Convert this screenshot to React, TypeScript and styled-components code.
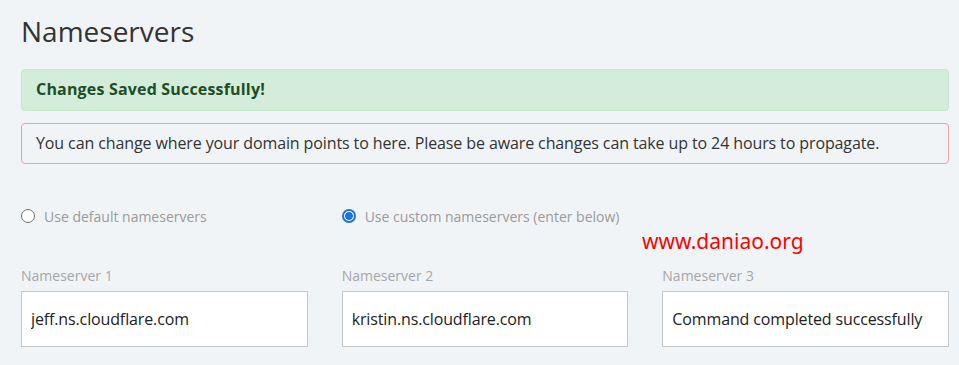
import styled, { createGlobalStyle } from "styled-components";

const GlobalStyle = createGlobalStyle`
  body {
    margin: 0;
    background: #f1f4f7;
    font-family: "Open Sans", "Noto Sans", sans-serif;
    color: #333;
  }
`;

const Page = styled.div`
  position: relative;
  padding: 12px 10px 18px 21px;
`;

const Title = styled.h1`
  margin: 0;
  font-size: 28px;
  font-weight: 400;
  line-height: 38px;
  color: #333;
`;

const Alert = styled.div<{ $kind: "success" | "info" }>`
  box-sizing: border-box;
  height: ${(p) => (p.$kind === "success" ? "42px" : "41px")};
  margin-top: ${(p) => (p.$kind === "success" ? "19px" : "12px")};
  padding: 0 14px;
  border: 1px solid ${(p) => (p.$kind === "success" ? "#c3e6cb" : "#f2a0a8")};
  border-radius: 4px;
  background: ${(p) => (p.$kind === "success" ? "#d4edda" : "transparent")};
  color: ${(p) => (p.$kind === "success" ? "#1e4d26" : "#333")};
  font-size: 16px;
  font-weight: ${(p) => (p.$kind === "success" ? 700 : 400)};
  letter-spacing: ${(p) => (p.$kind === "success" ? "0.18px" : "-0.11px")};
  line-height: 39px;
  white-space: nowrap;
`;

const Grid = styled.div<{ $top: number }>`
  display: grid;
  grid-template-columns: repeat(3, 1fr);
  column-gap: 34px;
  margin-top: ${(p) => p.$top}px;
`;

const RadioLabel = styled.label`
  display: flex;
  align-items: center;
  gap: 9px;
  height: 20px;
  font-size: 14px;
  color: #9a9a9a;
  white-space: nowrap;
`;

const RadioDot = styled.span<{ $checked?: boolean }>`
  box-sizing: border-box;
  flex: none;
  width: 14px;
  height: 14px;
  border-radius: 50%;
  border: ${(p) => (p.$checked ? "2px solid #1a73e8" : "1px solid #707070")};
  background: ${(p) =>
    p.$checked ? "radial-gradient(circle, #1a73e8 0 3.6px, #fff 4.2px)" : "#fff"};
`;

const Field = styled.div`
  display: flex;
  flex-direction: column;
  gap: 5px;
`;

const FieldLabel = styled.div`
  font-size: 14px;
  line-height: 20px;
  color: #a6a6a6;
`;

const Input = styled.input`
  box-sizing: border-box;
  width: 100%;
  height: 56px;
  margin: 0;
  padding: 0 9px;
  border: 1px solid #c8c8c8;
  background: #fff;
  font-family: "Open Sans", "Noto Sans", sans-serif;
  font-size: 16px;
  letter-spacing: -0.13px;
  color: #222;
  outline: none;
`;

const Watermark = styled.div`
  position: absolute;
  left: 642px;
  top: 226px;
  font-family: "Noto Sans", sans-serif;
  font-size: 21px;
  line-height: 30px;
  color: #ff0000;
`;

const servers = [
  "jeff.ns.cloudflare.com",
  "kristin.ns.cloudflare.com",
  "Command completed successfully",
];

export default function App() {
  return (
    <>
      <GlobalStyle />
      <Page>
        <Title>Nameservers</Title>
        <Alert $kind="success">Changes Saved Successfully!</Alert>
        <Alert $kind="info">
          You can change where your domain points to here. Please be aware changes can take
          up to 24 hours to propagate.
        </Alert>
        <Grid $top={42}>
          <RadioLabel>
            <RadioDot />
            Use default nameservers
          </RadioLabel>
          <RadioLabel>
            <RadioDot $checked />
            Use custom nameservers (enter below)
          </RadioLabel>
        </Grid>
        <Grid $top={40}>
          {servers.map((value, i) => (
            <Field key={i}>
              <FieldLabel>Nameserver {i + 1}</FieldLabel>
              <Input defaultValue={value} readOnly />
            </Field>
          ))}
        </Grid>
        <Watermark>www.daniao.org</Watermark>
      </Page>
    </>
  );
}
